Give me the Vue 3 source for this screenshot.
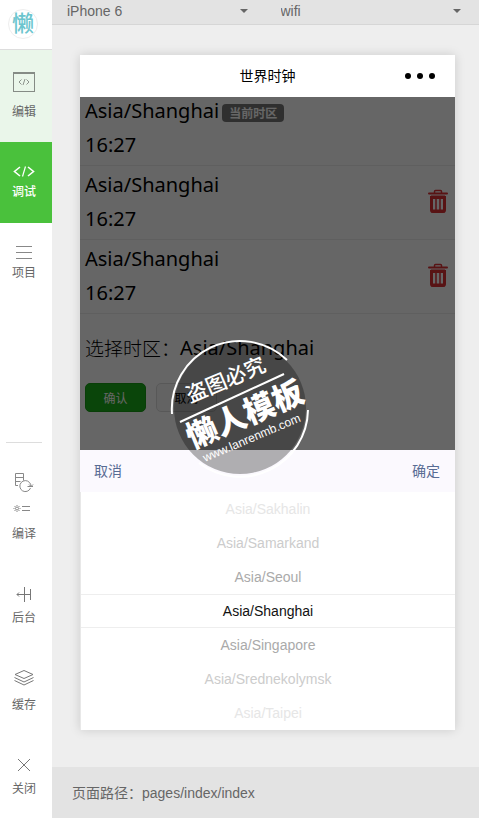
<script setup>
    import { ref } from "vue";

    const device = ref("iPhone 6");
    const network = ref("wifi");
    const activeTab = ref("debug");
    const selectedZone = ref("Asia/Shanghai");

    const clocks = ref([
        { id: 1, zone: "Asia/Shanghai", time: "16:27", current: true },
        { id: 2, zone: "Asia/Shanghai", time: "16:27", current: false },
        { id: 3, zone: "Asia/Shanghai", time: "16:27", current: false }
    ]);

    const zones = [
        "Asia/Sakhalin",
        "Asia/Samarkand",
        "Asia/Seoul",
        "Asia/Shanghai",
        "Asia/Singapore",
        "Asia/Srednekolymsk",
        "Asia/Taipei"
    ];

    function zoneClass(zone) {
        const distance = Math.abs(zones.indexOf(zone) - zones.indexOf(selectedZone.value));
        return "distance-" + Math.min(distance, 3);
    }

    function removeClock(id) {
        clocks.value = clocks.value.filter((clock) => clock.id !== id);
    }
</script>

<template>
    <div class="devtools">
        <nav class="sidebar">
            <div class="logo"><span>懒</span></div>

            <button class="tab tab-edit" type="button" @click="activeTab = 'edit'">
                <svg width="24" height="30" viewBox="0 0 24 30" fill="none">
                    <rect x="1.500" y="3" width="21" height="18.500" stroke="#858b85" />
                    <path d="M1 3h22" stroke="#858b85" stroke-width="2" />
                    <path d="M9.500 9.500l-2.500 2.500l2.500 2.500M14.500 9.500l2.500 2.500l-2.500 2.500M13 9l-2 6" stroke="#8d938d" />
                </svg>
                <span>编辑</span>
            </button>
            <button class="tab tab-debug" :class="{ active: activeTab === 'debug' }" type="button" @click="activeTab = 'debug'">
                <svg width="24" height="18" viewBox="0 0 24 18" fill="none" stroke="#fff">
                    <path d="M8 5l-5.500 4.500l5.500 4.500M16 5l5.500 4.500l-5.500 4.500" stroke-width="1.600" />
                    <path d="M13.500 4.500l-3 10" stroke-width="1.200" />
                </svg>
                <span>调试</span>
            </button>
            <button class="tab tab-project" type="button" @click="activeTab = 'project'">
                <svg width="24" height="18" viewBox="0 0 24 18" stroke="#888">
                    <path d="M4 3.500h16M4 9.500h16M4 15.500h16" />
                </svg>
                <span>项目</span>
            </button>

            <div class="tools">
                <button class="tool" type="button">
                    <svg width="24" height="50" viewBox="0 0 24 50" fill="none" stroke="#888">
                        <path d="M6 13.500H3.500V1.500h8v7M3.500 5.500h8M3.500 9.500h5" />
                        <path d="M17.500 10.500a5.500 5.500 0 1 0 1 5.500M17.500 10.500q1.500 1.500 1.500 4M15.500 14.500h5.500M17 12.500l2 2l2-2" />
                        <circle cx="5" cy="36.500" r="1.500" />
                        <path d="M5 33v1M5 39v1M1.500 36.500h1M7.500 36.500h1M2.500 34l1 1M7.500 34l-1 1M2.500 39l1-1M7.500 39l-1-1M10 34.500h8M10 38.500h8" />
                    </svg>
                    <span>编译</span>
                </button>
                <button class="tool" type="button">
                    <svg width="24" height="24" viewBox="0 0 24 24" fill="none" stroke="#777">
                        <path d="M12.500 5v15M18.500 7v11M12.500 12.500h6M12 12.500H5M7 10.500l-2 2l2 2" />
                    </svg>
                    <span>后台</span>
                </button>
                <button class="tool" type="button">
                    <svg width="24" height="27" viewBox="0 0 24 27" fill="none" stroke="#777">
                        <path d="M12 4.500l9 4l-9 4l-9-4zM2.500 11.500l9.500 4.500l9.500-4.500M2.500 14.500l9.500 4.500l9.500-4.500" />
                    </svg>
                    <span>缓存</span>
                </button>
                <button class="tool" type="button">
                    <svg width="24" height="24" viewBox="0 0 24 24" stroke="#777">
                        <path d="M6 6l12 12M18 6l-12 12" />
                    </svg>
                    <span>关闭</span>
                </button>
            </div>
        </nav>

        <div class="workspace">
            <header class="toolbar">
                <div class="dropdown">
                    <select v-model="device" aria-label="设备">
                        <option>iPhone 6</option>
                        <option>iPhone 5</option>
                    </select>
                </div>
                <div class="dropdown">
                    <select v-model="network" aria-label="网络">
                        <option>wifi</option>
                        <option>4G</option>
                    </select>
                </div>
            </header>

            <main class="stage">
                <div class="phone">
                    <div class="nav-bar">
                        <h1>世界时钟</h1>
                        <button class="more" type="button" aria-label="更多">
                            <svg width="32" height="8" viewBox="0 0 32 8">
                                <circle cx="4" cy="4" r="3" />
                                <circle cx="16" cy="4" r="3" />
                                <circle cx="28" cy="4" r="3" />
                            </svg>
                        </button>
                    </div>

                    <div class="page">
                        <ul class="clocks">
                            <li v-for="clock in clocks" :key="clock.id" class="clock">
                                <div class="clock-info">
                                    <div class="zone">
                                        {{ clock.zone }}
                                        <span v-if="clock.current" class="badge">当前时区</span>
                                    </div>
                                    <div class="time">{{ clock.time }}</div>
                                </div>
                                <button v-if="!clock.current" class="remove" type="button" aria-label="删除" @click="removeClock(clock.id)">
                                    <svg width="20" height="24" viewBox="0 1 20 24" fill="none" stroke="#dc3034">
                                        <path d="M6.500 4V2.500q0-1 1-1h5q1 0 1 1V4" stroke-width="1.500" />
                                        <path d="M1 4.500h18" stroke-width="2" stroke-linecap="round" />
                                        <path d="M3.500 8.500h13V21q0 1.500-1.500 1.500H5q-1.500 0-1.500-1.500z" stroke-width="3" />
                                        <path d="M3 8h14M3 22h14" stroke-width="3" />
                                        <path d="M8 9v12M12 9v12" stroke-width="1.500" />
                                    </svg>
                                </button>
                            </li>
                        </ul>
                        <div class="chooser">
                            <span class="chooser-label">选择时区：</span>
                            <span>{{ selectedZone }}</span>
                        </div>
                        <div class="actions">
                            <button class="btn primary" type="button">确认</button>
                            <button class="btn" type="button">取消</button>
                        </div>
                        <div class="mask"></div>
                    </div>

                    <div class="picker-bar">
                        <button type="button">取消</button>
                        <button type="button">确定</button>
                    </div>
                    <ul class="picker">
                        <li v-for="zone in zones" :key="zone" :class="zoneClass(zone)" @click="selectedZone = zone">
                            {{ zone }}
                        </li>
                    </ul>

                    <svg class="watermark" width="144" height="144" viewBox="0 0 144 144" fill="#fff">
                        <circle cx="72" cy="72" r="66" fill="#000" fill-opacity="0.3" />
                        <g fill="none" stroke="#fff" stroke-width="2">
                            <path d="M4 78A68 68 0 0 1 119 24" />
                            <path d="M140 74A68 68 0 0 1 31 127" />
                            <path d="M12 86L116 38" />
                        </g>
                        <g transform="rotate(-23 72 72)">
                            <text x="70" y="48" font-size="21" font-weight="500" text-anchor="middle">盗图必究</text>
                            <text x="74" y="91" font-size="31" font-weight="900" text-anchor="middle">懒人模板</text>
                            <text x="71" y="108" class="site" font-size="12" text-anchor="middle">www.lanrenmb.com</text>
                        </g>
                    </svg>
                </div>
            </main>

            <footer class="path-bar">页面路径：pages/index/index</footer>
        </div>
    </div>
</template>

<style>
    body {
        margin: 0;
    }
</style>

<style scoped>
    .devtools {
        display: flex;
        min-height: 100vh;
        background-color: #eee;
        font: 14px/20px "Liberation Sans", "Noto Sans CJK SC", sans-serif;
        color: #666;
    }
    button {
        margin: 0;
        padding: 0;
        border: none;
        background: none;
        font: inherit;
        color: inherit;
        cursor: pointer;
    }
    ul {
        margin: 0;
        padding: 0;
        list-style: none;
    }
    svg {
        display: block;
        overflow: visible;
    }

    .sidebar {
        display: flex;
        flex-direction: column;
        flex: none;
        width: 52px;
        background-color: #fff;
        font-size: 12px;
        line-height: 16px;
    }
    .logo {
        box-sizing: border-box;
        height: 50px;
        padding: 9px 0 0 8px;
        border-bottom: 1px solid #ddd;
    }
    .logo span {
        display: flex;
        align-items: center;
        justify-content: center;
        box-sizing: border-box;
        width: 30px;
        height: 30px;
        border: 1px solid #eee;
        border-radius: 50%;
        font-size: 22px;
        font-weight: 500;
        color: #6cc5ce;
    }
    .tab,
    .tool {
        display: flex;
        flex-direction: column;
        align-items: center;
        gap: 4px;
        padding-right: 4px;
    }
    .tab-edit {
        padding-top: 20px;
        padding-bottom: 22px;
        background-color: #eaf6ea;
    }
    .tab-debug {
        padding-top: 20px;
        padding-bottom: 23px;
    }
    .tab-debug.active {
        background-color: #4ac13c;
        font-weight: 500;
        color: #fff;
    }
    .tab-project {
        padding-top: 20px;
    }
    .tools {
        position: relative;
        display: flex;
        flex-direction: column;
        gap: 40px;
        margin-top: auto;
        padding: 30px 0 21px;
    }
    .tools::before {
        content: "";
        position: absolute;
        top: 0;
        left: 6px;
        right: 10px;
        border-top: 1px solid #ddd;
    }

    .workspace {
        display: flex;
        flex-direction: column;
        flex: 1;
        min-width: 0;
    }
    .toolbar {
        display: grid;
        grid-template-columns: 1fr 1fr;
        height: 24px;
        border-bottom: 1px solid #d6d6d6;
        background-color: #e3e3e3;
    }
    .dropdown {
        position: relative;
    }
    .dropdown select {
        appearance: none;
        width: 100%;
        height: 22px;
        padding: 0 32px 0 15px;
        border: none;
        background: none;
        font: inherit;
        color: inherit;
    }
    .dropdown::after {
        content: "";
        position: absolute;
        top: 9px;
        right: 18px;
        border: 4px solid transparent;
        border-top-color: #666;
        border-bottom: none;
        pointer-events: none;
    }
    .stage {
        flex: 1;
        padding: 30px 24px 37px 28px;
    }
    .path-bar {
        padding: 16px 20px 15px;
        background-color: #e3e3e3;
    }

    .phone {
        position: relative;
        background-color: #fff;
        box-shadow: 0 0 10px rgba(0, 0, 0, 0.15);
        color: #000;
    }
    .nav-bar {
        display: grid;
        grid-template-columns: 1fr auto 1fr;
        align-items: center;
        height: 42px;
        padding: 0 19px;
    }
    .nav-bar h1 {
        grid-column: 2;
        margin: 0;
        font-size: 14px;
        font-weight: 400;
    }
    .more {
        justify-self: end;
    }
    .page {
        position: relative;
        padding-bottom: 38px;
        font-family: "Noto Sans", "Noto Sans CJK SC", sans-serif;
        font-size: 20px;
        line-height: 28px;
    }
    .clock {
        display: flex;
        align-items: center;
        justify-content: space-between;
        padding: 5px 7px 6px 5px;
        border-bottom: 1px solid #eee;
    }
    .clock:first-child {
        padding-top: 0;
    }
    .clock-info {
        display: grid;
        gap: 6px;
    }
    .zone {
        display: flex;
        align-items: center;
        gap: 3px;
    }
    .badge {
        height: 18px;
        margin-top: 4px;
        padding: 0 7px;
        border-radius: 4px;
        background-color: #777;
        font: 700 12px/18px "Noto Sans CJK SC", sans-serif;
        color: #fff;
    }
    .chooser {
        display: flex;
        padding: 20px 5px 0;
    }
    .chooser-label {
        font-family: "Noto Sans CJK SC", sans-serif;
        font-size: 19px;
        font-weight: 300;
    }
    .actions {
        display: flex;
        gap: 10px;
        padding: 21px 5px 0;
    }
    .btn {
        box-sizing: border-box;
        width: 61px;
        height: 29px;
        border: 1px solid #ddd;
        border-radius: 5px;
        background-color: #f8f8f8;
        font: 12px/26px "Noto Sans CJK SC", sans-serif;
        color: #000;
    }
    .btn.primary {
        border-color: #179b16;
        background-color: #1aad19;
        color: #fff;
    }
    .mask {
        position: absolute;
        inset: 0;
        background-color: rgba(0, 0, 0, 0.6);
    }

    .picker-bar {
        display: flex;
        align-items: center;
        justify-content: space-between;
        height: 42px;
        padding: 0 15px 0 14px;
        background-color: #fbf9fe;
        color: #586c94;
    }
    .picker {
        border-left: 1px solid #e8e8e8;
        text-align: center;
    }
    .picker li {
        box-sizing: border-box;
        height: 34px;
        line-height: 34px;
    }
    .picker .distance-0 {
        border: solid #eee;
        border-width: 1px 0;
        line-height: 32px;
        color: #111;
    }
    .picker .distance-1 {
        color: #aaa;
    }
    .picker .distance-2 {
        color: #ccc;
    }
    .picker .distance-3 {
        color: #e6e6e6;
    }

    .watermark {
        position: absolute;
        top: 281px;
        left: 50%;
        margin-left: -100px;
        font-family: "Noto Sans CJK SC", sans-serif;
        pointer-events: none;
    }
    .site {
        font-family: "Liberation Sans", sans-serif;
    }
</style>
